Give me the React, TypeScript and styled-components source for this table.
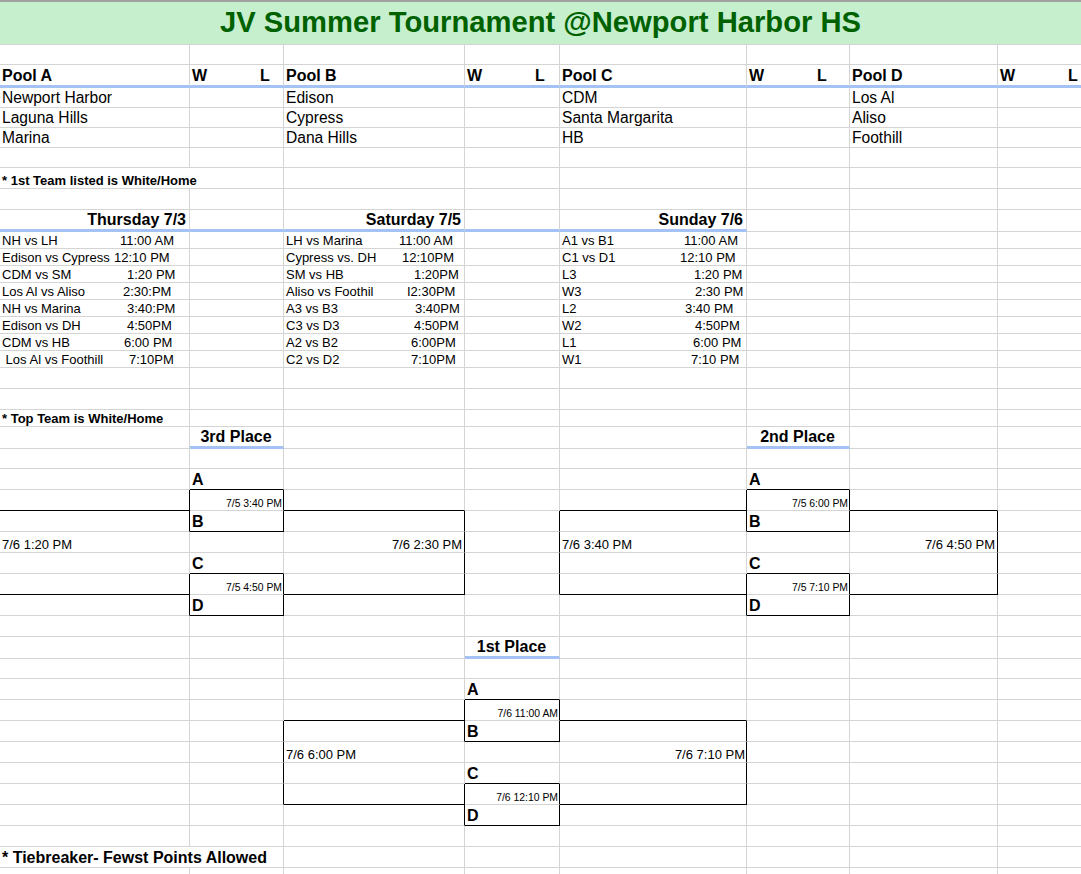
import React from "react";
import styled, { createGlobalStyle } from "styled-components";

const GlobalStyle = createGlobalStyle`
  html, body {
    margin: 0;
    padding: 0;
    background: #fff;
    overflow: hidden;
  }
  body {
    font-family: "Liberation Sans", Arial, sans-serif;
    color: #000;
  }
`;

type Line = "g" | "k" | "b";

interface Spec {
  text?: string;
  title?: boolean;
  wl?: boolean;
  match?: [string, string, number];
  bold?: boolean;
  size?: number;
  align?: "left" | "right" | "center";
  span?: number;
  bb?: Line;
  br?: Line;
  pr?: number;
}

// column widths and row heights of the sheet, in px (last column runs off screen)
const VIEW = 1081;
const COLS = [190, 94, 181, 95, 187, 103, 148, 100];
const ROWS = [
  43, 20, 23, 20, 20, 20, 20, 21, 21, 22, 17, 17, 17, 17, 17, 17, 17, 17, 21, 21, 17, 22, 20, 21,
  21, 21, 21, 21, 21, 21, 21, 22, 20, 21, 21, 21, 21, 21, 21, 21, 21, 21, 21,
];
const SHEET_W = COLS.reduce((a, b) => a + b, 0);

const cells: Record<string, Spec> = {};
const at = (r: number, c: number) => (cells[`${r}-${c}`] ??= {});
const put = (r: number, c: number, s: Spec) => Object.assign(at(r, c), s);

// title
put(0, 0, { text: "JV Summer Tournament @Newport Harbor HS", title: true, span: 8 });

// pools
const pools = [
  ["Pool A", "Newport Harbor", "Laguna Hills", "Marina"],
  ["Pool B", "Edison", "Cypress", "Dana Hills"],
  ["Pool C", "CDM", "Santa Margarita", "HB"],
  ["Pool D", "Los Al", "Aliso", "Foothill"],
];
pools.forEach((p, i) => {
  const c = i * 2;
  put(2, c, { text: p[0], bold: true, size: 16 });
  put(2, c + 1, { wl: true, bold: true, size: 16 });
  p.slice(1).forEach((t, j) => put(3 + j, c, { text: t, size: 15.6 }));
});
for (let c = 0; c < 8; c++) at(2, c).bb = "b";

put(7, 0, { text: "* 1st Team listed is White/Home", bold: true, span: 2 });

// schedule
const days: [number, string, [string, string, number][]][] = [
  [0, "Thursday 7/3", [
    ["NH vs LH", "11:00 AM", 120],
    ["Edison vs Cypress", "12:10 PM", 114],
    ["CDM vs SM", "1:20 PM", 127],
    ["Los Al vs Aliso", "2:30:PM", 123],
    ["NH vs Marina", "3:40:PM", 127],
    ["Edison vs DH", "4:50PM", 127],
    ["CDM vs HB", "6:00 PM", 124],
    [" Los Al vs Foothill", "7:10PM", 129],
  ]],
  [2, "Saturday 7/5", [
    ["LH vs Marina", "11:00 AM", 115],
    ["Cypress vs. DH", "12:10PM", 118],
    ["SM vs HB", "1:20PM", 130],
    ["Aliso vs Foothil", "I2:30PM", 123],
    ["A3 vs B3", "3:40PM", 131],
    ["C3 vs D3", "4:50PM", 130],
    ["A2 vs B2", "6:00PM", 127],
    ["C2 vs D2", "7:10PM", 127],
  ]],
  [4, "Sunday 7/6", [
    ["A1 vs B1", "11:00 AM", 124],
    ["C1 vs D1", "12:10 PM", 120],
    ["L3", "1:20 PM", 134],
    ["W3", "2:30 PM", 135],
    ["L2", "3:40 PM", 125],
    ["W2", "4:50PM", 135],
    ["L1", "6:00 PM", 133],
    ["W1", "7:10 PM", 131],
  ]],
];
days.forEach(([c, head, games]) => {
  put(9, c, { text: head, bold: true, size: 16, align: "right", pr: 3 });
  games.forEach((g, j) => put(10 + j, c, { match: g }));
});
for (let c = 0; c < 5; c++) at(9, c).bb = "b";

put(20, 0, { text: "* Top Team is White/Home", bold: true });
put(41, 0, { text: "* Tiebreaker- Fewst Points Allowed", bold: true, size: 16, span: 2 });

// brackets
const blackBottom = (r: number, c: number) => { at(r, c).bb = "k"; };
const blackRight = (r: number, c: number) => { at(r, c).br = "k"; };

const place = (head: string, c: number, headRow: number, top: number, times: [string, string]) => {
  put(headRow, c, { text: head, bold: true, size: 16, align: "center", bb: "b" });
  [top, top + 4].forEach((t, k) => {
    put(t - 1, c, { text: k === 0 ? "A" : "C", bold: true, size: 16 });
    put(t, c, { text: times[k], size: 10.4, align: "right", pr: 1 });
    put(t + 1, c, { text: k === 0 ? "B" : "D", bold: true, size: 16 });
    blackBottom(t - 1, c);
    blackBottom(t + 1, c);
    [t, t + 1].forEach((r) => { blackRight(r, c - 1); blackRight(r, c); });
  });
};
const link = (c: number, top: number, side: number | null) => {
  blackBottom(top, c);
  blackBottom(top + 4, c);
  if (side !== null) for (let r = top + 1; r <= top + 4; r++) blackRight(r, side);
};

place("3rd Place", 1, 21, 24, ["7/5 3:40 PM", "7/5 4:50 PM"]);
place("2nd Place", 5, 21, 24, ["7/5 6:00 PM", "7/5 7:10 PM"]);
place("1st Place", 3, 31, 34, ["7/6 11:00 AM", "7/6 12:10 PM"]);

link(0, 24, null);
link(2, 24, 2);
link(4, 24, 3);
link(6, 24, 6);
link(2, 34, 1);
link(4, 34, 4);

put(26, 0, { text: "7/6 1:20 PM" });
put(26, 2, { text: "7/6 2:30 PM", align: "right", pr: 2 });
put(26, 4, { text: "7/6 3:40 PM" });
put(26, 6, { text: "7/6 4:50 PM", align: "right", pr: 2 });
put(36, 2, { text: "7/6 6:00 PM" });
put(36, 4, { text: "7/6 7:10 PM", align: "right", pr: 1 });

const lineColor = (l?: Line) => (l === "k" ? "#000" : l === "b" ? "#a4c2f4" : "#d4d4d4");

const Sheet = styled.div`
  display: grid;
  grid-template-columns: ${COLS.map((w) => `${w}px`).join(" ")};
  grid-template-rows: ${ROWS.map((h) => `${h}px`).join(" ")};
  width: ${SHEET_W}px;
  border-top: 2px solid #a0a0a0;
`;

const Cell = styled.div<{
  $bb?: Line;
  $br?: Line;
  $span?: number;
  $bold?: boolean;
  $size?: number;
  $align?: string;
  $pr?: number;
}>`
  grid-column: span ${(p) => p.$span ?? 1};
  box-sizing: border-box;
  display: flex;
  align-items: flex-end;
  justify-content: ${(p) =>
    p.$align === "right" ? "flex-end" : p.$align === "center" ? "center" : "flex-start"};
  padding: 0 ${(p) => p.$pr ?? 3}px 1px 2px;
  border-right: 1px solid ${(p) => lineColor(p.$br)};
  border-bottom: ${(p) => (p.$bb === "b" ? 3 : 1)}px solid ${(p) => lineColor(p.$bb)};
  font-size: ${(p) => p.$size ?? 13}px;
  font-weight: ${(p) => (p.$bold ? 700 : 400)};
  line-height: 1;
  white-space: pre;
  min-width: 0;
`;

// centred on the visible window, not on the whole (wider) sheet
const TitleCell = styled(Cell)`
  background: #c6efce;
  color: #006100;
  font-size: 29.2px;
  font-weight: 700;
  align-items: center;
  justify-content: center;
  border-right: none;
  padding: 0 ${SHEET_W - VIEW}px 1px 0;
`;

const WinLoss = styled.span`
  display: flex;
  span:first-child {
    width: 68px;
  }
`;

const Match = styled.div<{ $at: number }>`
  display: grid;
  grid-template-columns: ${(p) => p.$at - 2}px auto;
  width: 100%;
`;

function SheetCell({ s }: { s: Spec }) {
  if (s.title) {
    return <TitleCell $span={s.span}>{s.text}</TitleCell>;
  }
  return (
    <Cell
      $bb={s.bb}
      $br={s.br}
      $span={s.span}
      $bold={s.bold}
      $size={s.size}
      $align={s.align}
      $pr={s.pr}
    >
      {s.wl ? (
        <WinLoss>
          <span>W</span>
          <span>L</span>
        </WinLoss>
      ) : s.match ? (
        <Match $at={s.match[2]}>
          <span>{s.match[0]}</span>
          <span>{s.match[1]}</span>
        </Match>
      ) : (
        s.text
      )}
    </Cell>
  );
}

export default function App() {
  const out: React.ReactNode[] = [];
  ROWS.forEach((_, r) => {
    let c = 0;
    while (c < COLS.length) {
      const s = cells[`${r}-${c}`] ?? {};
      out.push(<SheetCell key={`${r}-${c}`} s={s} />);
      c += s.span ?? 1;
    }
  });
  return (
    <>
      <GlobalStyle />
      <Sheet>{out}</Sheet>
    </>
  );
}
